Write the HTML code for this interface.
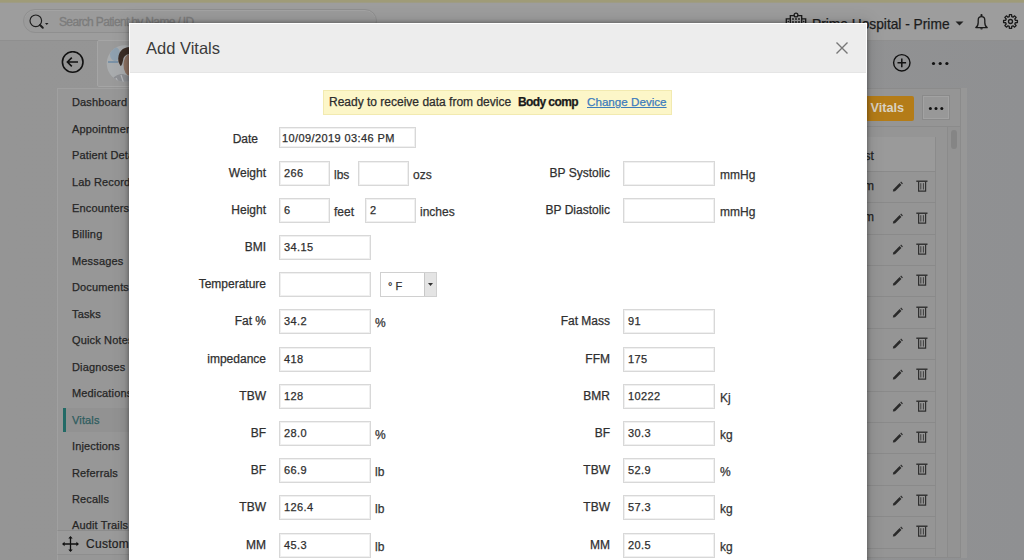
<!DOCTYPE html>
<html><head><meta charset="utf-8">
<style>
*{box-sizing:border-box;margin:0;padding:0}
html,body{width:1024px;height:560px;overflow:hidden;background:linear-gradient(90deg,#959595 0,#949494 60%,#8f9092 100%);font-family:"Liberation Sans",sans-serif;position:relative}
.a{position:absolute}
#topbar{left:0;top:0;width:1024px;height:3px;background:linear-gradient(#9f9b78 0,#9f9b78 2px,#9d9c90 3px)}
#hdr{left:0;top:3px;width:1024px;height:38px;background:#9d9d9d;border-bottom:1px solid #8f8f8f}
#search{left:23px;top:9px;width:354px;height:24px;border-radius:12px;background:#9b9b9b;border:1px solid #8f8f8f;box-shadow:inset 0 1px 0 #a3a3a3}
.stxt{font-size:13px;color:#8c8c8c;white-space:nowrap}
.htxt{font-size:14px;color:#1c1c1c;white-space:nowrap}
.side{left:57px;top:88px;width:100px;height:480px;background:#979797;border-left:1px solid #a0a0a0;border-top:1px solid #a0a0a0}
.si{position:absolute;left:72px;font-size:11px;line-height:14px;color:#262626;white-space:nowrap;letter-spacing:0.15px}
.si.act{color:#2f5d5f}
#actbg{left:64px;top:408px;width:80px;height:24px;background:#929292}
#actbar{left:63px;top:408px;width:3px;height:24px;background:#226a66}
.panel{left:840px;top:88px;width:121px;height:470px;background:#959595;border:1px solid #8b8b8b}
#avcard{left:97px;top:40px;width:60px;height:47px;background:#9a9a9a;border:1px solid #a5a5a5;border-radius:2px}
#orange{left:840px;top:95.5px;width:74px;height:25px;background:#b47c18;border-radius:2px}
#otxt{left:870.5px;top:101px;font-size:12.7px;font-weight:bold;color:#dad2c2}
#dotbtn{left:922px;top:95px;width:28px;height:25px;border:1px solid #8a8a8a;box-shadow:inset 0 0 0 1px #a2a2a2;background:#989898}
#tbline{left:840px;top:126px;width:120px;height:1px;background:#8b8b8b}
#thead{left:840px;top:137px;width:96px;height:34px;background:#9a9a9a;border-right:1px solid #8b8b8b}
.tsep{left:840px;width:96px;height:1px;background:#8a8a8a}
#tbody{left:840px;top:171px;width:96px;height:385px;border-right:1px solid #8b8b8b}
#strack{left:947px;top:127px;width:13px;height:430px;border-left:1px solid #8b8b8b;background:#939393}
#sthumb{left:951px;top:130px;width:6px;height:19px;border-radius:3px;background:#858585}
.ttxt{font-size:12px;color:#222}
#modal{left:129px;top:23px;width:738px;height:560px;background:#fff;box-shadow:0 0 4px 1px rgba(0,0,0,0.3),0 0 16px 2px rgba(0,0,0,0.12)}
#mhead{left:130px;top:24px;width:736px;height:49px;background:#ededed;border-bottom:1px solid #e5e5e5}
#mtitle{left:146px;top:39px;font-size:16.5px;color:#3b3b3b;white-space:nowrap}
.lbl{position:absolute;font-size:12px;line-height:14px;color:#2f2f2f;white-space:nowrap;text-align:right}
.inp{position:absolute;border:1px solid #d8d8d8;box-shadow:inset 0 0 0 1px #f0f0f0;background:#fff;font-size:11px;letter-spacing:0.4px;line-height:14px;color:#2e2e2e;padding:4px 0 0 4px;white-space:nowrap}
.unit{position:absolute;font-size:12px;line-height:14px;color:#333;white-space:nowrap}
.sel{position:absolute;border:1px solid #d0d0d0;background:#fff}
.deg{position:absolute;left:7px;top:6px;font-size:11px;line-height:14px;color:#333}
.selbtn{position:absolute;right:0;top:0;width:12px;height:23px;background:#e4e4e4;border-left:1px solid #c8c8c8;display:flex;align-items:center;justify-content:center}
#banner{left:323px;top:90px;width:349px;height:25px;background:#fcf6c8;border:1px solid #f2eab0}
.btxt{position:absolute;top:95.4px;font-size:12px;line-height:14px;white-space:nowrap;color:#2c2c2c}
.lbl,.inp,.unit,.btxt,.si,.deg,.htxt,.ttxt{-webkit-text-stroke:0.25px currentColor}
</style></head>
<body>
<div id="topbar" class="a"></div>
<div id="hdr" class="a"></div>
<div id="search" class="a"></div>
<svg class="a" style="left:29px;top:14px" width="22" height="17" viewBox="0 0 22 17"><circle cx="6.8" cy="6.8" r="5.8" stroke="#1e1e1e" stroke-width="1.2" fill="none"/><path d="M11 11 L13.8 13.8" stroke="#1e1e1e" stroke-width="2" stroke-linecap="round"/><path d="M16 9H19.5L17.75 11Z" fill="#1e1e1e"/></svg>
<div class="a stxt" style="left:59px;top:14.5px;font-size:12px;letter-spacing:-0.65px;-webkit-text-stroke:0.35px #7c7c7c;color:#7c7c7c">Search Patient by Name / ID</div>
<svg class="a" style="left:785px;top:11px" width="22" height="20" viewBox="0 0 22 20"><g stroke="#1a1a1a" stroke-width="1.3" fill="none"><path d="M5.3 18V4.6H16.7V18"/><path d="M1.3 18V7.8H5.3M16.7 7.8H20.7V18"/><circle cx="11" cy="4" r="1.9" fill="#9d9d9d"/></g><g fill="#1a1a1a"><circle cx="8" cy="8" r="0.9"/><circle cx="11" cy="8" r="0.9"/><circle cx="14" cy="8" r="0.9"/><circle cx="8" cy="11" r="0.9"/><circle cx="11" cy="11" r="0.9"/><circle cx="14" cy="11" r="0.9"/><circle cx="3.3" cy="10.5" r="0.8"/><circle cx="18.7" cy="10.5" r="0.8"/></g></svg>
<div class="a htxt" style="left:812px;top:16.5px;font-size:13.75px">Prime Hospital - Prime</div>
<svg class="a" style="left:955px;top:21px" width="9" height="5" viewBox="0 0 9 5"><path d="M0.5 0.5H8.5L4.5 4.5Z" fill="#222"/></svg>
<svg class="a" style="left:974px;top:13px" width="16" height="18" viewBox="0 0 16 18"><circle cx="7.5" cy="2.2" r="1.1" fill="#1a1a1a"/><path d="M1.8 14.6 C3.4 13.6 4.2 12.2 4.2 9.5 L4.2 7.2 C4.2 5 5.6 3.7 7.5 3.7 C9.4 3.7 10.8 5 10.8 7.2 L10.8 9.5 C10.8 12.2 11.6 13.6 13.2 14.6 Z" stroke="#1a1a1a" stroke-width="1.3" fill="none" stroke-linejoin="round"/><path d="M6.2 15.2 A1.3 1.3 0 0 0 8.8 15.2Z" fill="#1a1a1a"/></svg>
<svg class="a" style="left:1002.2px;top:12.8px" width="17" height="17" viewBox="0 0 17 17"><path d="M7.40 1.59 L9.60 1.59 L9.74 3.66 L11.05 4.20 L12.61 2.84 L14.16 4.39 L12.80 5.95 L13.34 7.26 L15.41 7.40 L15.41 9.60 L13.34 9.74 L12.80 11.05 L14.16 12.61 L12.61 14.16 L11.05 12.80 L9.74 13.34 L9.60 15.41 L7.40 15.41 L7.26 13.34 L5.95 12.80 L4.39 14.16 L2.84 12.61 L4.20 11.05 L3.66 9.74 L1.59 9.60 L1.59 7.40 L3.66 7.26 L4.20 5.95 L2.84 4.39 L4.39 2.84 L5.95 4.20 L7.26 3.66Z" stroke="#1a1a1a" stroke-width="1.3" fill="none" stroke-linejoin="round"/><circle cx="8.5" cy="8.5" r="2" stroke="#1a1a1a" stroke-width="1.3" fill="none"/></svg>

<svg class="a" style="left:61px;top:51px" width="24" height="23" viewBox="0 0 24 23"><circle cx="11.7" cy="11" r="10.3" stroke="#111" stroke-width="1.6" fill="none"/><path d="M17 11H6.5M10.8 6.6L6.4 11L10.8 15.4" stroke="#111" stroke-width="1.6" fill="none"/></svg>
<div id="avcard" class="a"></div>
<svg class="a" style="left:105px;top:44px" width="40" height="40" viewBox="0 0 40 40"><defs><clipPath id="cp"><circle cx="20" cy="19.5" r="18.3"/></clipPath></defs><g clip-path="url(#cp)"><rect width="40" height="40" fill="#a9acae"/><ellipse cx="10" cy="10" rx="5" ry="7" fill="#8fa1b0"/><rect x="3" y="17" width="10" height="2" fill="#7b92a6"/><path d="M5 40 C7 33 12 30 18 30 L26 33 L26 40 Z" fill="#8e9094"/><path d="M11 34 L14 40 M16 31 L19 40" stroke="#b5b7ba" stroke-width="1.3"/><ellipse cx="25" cy="21" rx="6.5" ry="11" fill="#8f7364"/><path d="M13.5 18 C12 8 18 3 25 3 L30 3 L30 10 C25 9 20 10 18.5 14 C18 17 17 22 15.5 22 Z" fill="#3c2e27"/></g></svg>
<svg class="a" style="left:892px;top:53px" width="20" height="20" viewBox="0 0 20 20"><circle cx="9.8" cy="9.8" r="8.2" stroke="#111" stroke-width="1.4" fill="none"/><path d="M9.8 5.4V14.2M5.5 9.8H14.1" stroke="#111" stroke-width="1.5"/></svg>
<svg class="a" style="left:931px;top:60.6px" width="19" height="5" viewBox="0 0 19 5"><circle cx="2.5" cy="2.5" r="1.6" fill="#111"/><circle cx="9.2" cy="2.5" r="1.6" fill="#111"/><circle cx="15.9" cy="2.5" r="1.6" fill="#111"/></svg>

<div class="a side"></div>
<div id="actbg" class="a"></div>
<div id="actbar" class="a"></div>
<div class="si" style="top:95.2px">Dashboard</div>
<div class="si" style="top:121.7px">Appointments</div>
<div class="si" style="top:148.1px">Patient Details</div>
<div class="si" style="top:174.6px">Lab Records</div>
<div class="si" style="top:201.0px">Encounters</div>
<div class="si" style="top:227.4px">Billing</div>
<div class="si" style="top:253.9px">Messages</div>
<div class="si" style="top:280.4px">Documents</div>
<div class="si" style="top:306.8px">Tasks</div>
<div class="si" style="top:333.2px">Quick Notes</div>
<div class="si" style="top:359.7px">Diagnoses</div>
<div class="si" style="top:386.1px">Medications</div>
<div class="si act" style="top:412.6px">Vitals</div>
<div class="si" style="top:439.0px">Injections</div>
<div class="si" style="top:465.5px">Referrals</div>
<div class="si" style="top:491.9px">Recalls</div>
<div class="si" style="top:518.4px">Audit Trails</div>
<div class="a" style="left:57px;top:530px;width:90px;height:25px;background:#9a9a9a;border-top:1px solid #8c8c8c;border-bottom:1px solid #8e8e8e;border-left:1px solid #a0a0a0"></div>
<svg class="a" style="left:62px;top:536px" width="17" height="16" viewBox="0 0 17 16"><path d="M8.5 1V15M1 8H16" stroke="#111" stroke-width="1.3"/><path d="M8.5 0L6.3 2.6H10.7Z M8.5 16L6.3 13.4H10.7Z M0 8L2.6 5.8V10.2Z M17 8L14.4 5.8V10.2Z" fill="#111"/></svg>
<div class="a" style="left:86px;top:536.5px;font-size:12px;letter-spacing:0.3px;color:#1e1e1e;white-space:nowrap;-webkit-text-stroke:0.2px #1e1e1e">Customize</div>

<div class="a panel"></div>
<div id="orange" class="a"></div>
<div id="otxt" class="a">Vitals</div>
<div id="dotbtn" class="a"></div>
<svg class="a" style="left:928px;top:105.5px" width="17" height="5" viewBox="0 0 17 5"><circle cx="2.4" cy="2.5" r="1.5" fill="#111"/><circle cx="8" cy="2.5" r="1.5" fill="#111"/><circle cx="13.8" cy="2.5" r="1.5" fill="#111"/></svg>
<div id="tbline" class="a"></div>
<div id="thead" class="a"></div>
<div id="tbody" class="a"></div>
<div class="a ttxt" style="left:864.5px;top:149px">st</div>
<div class="a tsep" style="top:170.9px"></div>
<svg class="a" style="left:891px;top:181.1px" width="14" height="14" viewBox="0 0 14 14"><path d="M1.8 10.6 L2.3 8.4 L8.6 2.1 L10.4 3.9 L4.1 10.2 Z" fill="#2a2a2a"/><path d="M9.3 1.4 L10.1 0.6 L11.9 2.4 L11.1 3.2Z" fill="#2a2a2a"/></svg>
<svg class="a" style="left:916px;top:178.1px" width="12" height="14" viewBox="0 0 12 14"><path d="M0.3 3.2H11.5" stroke="#262626" stroke-width="1.3"/><path d="M2.6 3.5V13.2H9.6V3.5" stroke="#303030" stroke-width="1.2" fill="none"/><path d="M4.8 5.2V11.5M7.4 5.2V11.5" stroke="#333" stroke-width="0.9"/></svg>
<div class="a ttxt" style="left:864px;top:178.9px">m</div>
<div class="a tsep" style="top:202.3px"></div>
<svg class="a" style="left:891px;top:212.5px" width="14" height="14" viewBox="0 0 14 14"><path d="M1.8 10.6 L2.3 8.4 L8.6 2.1 L10.4 3.9 L4.1 10.2 Z" fill="#2a2a2a"/><path d="M9.3 1.4 L10.1 0.6 L11.9 2.4 L11.1 3.2Z" fill="#2a2a2a"/></svg>
<svg class="a" style="left:916px;top:209.5px" width="12" height="14" viewBox="0 0 12 14"><path d="M0.3 3.2H11.5" stroke="#262626" stroke-width="1.3"/><path d="M2.6 3.5V13.2H9.6V3.5" stroke="#303030" stroke-width="1.2" fill="none"/><path d="M4.8 5.2V11.5M7.4 5.2V11.5" stroke="#333" stroke-width="0.9"/></svg>
<div class="a ttxt" style="left:864px;top:210.3px">m</div>
<div class="a tsep" style="top:233.7px"></div>
<svg class="a" style="left:891px;top:243.9px" width="14" height="14" viewBox="0 0 14 14"><path d="M1.8 10.6 L2.3 8.4 L8.6 2.1 L10.4 3.9 L4.1 10.2 Z" fill="#2a2a2a"/><path d="M9.3 1.4 L10.1 0.6 L11.9 2.4 L11.1 3.2Z" fill="#2a2a2a"/></svg>
<svg class="a" style="left:916px;top:240.9px" width="12" height="14" viewBox="0 0 12 14"><path d="M0.3 3.2H11.5" stroke="#262626" stroke-width="1.3"/><path d="M2.6 3.5V13.2H9.6V3.5" stroke="#303030" stroke-width="1.2" fill="none"/><path d="M4.8 5.2V11.5M7.4 5.2V11.5" stroke="#333" stroke-width="0.9"/></svg>
<div class="a tsep" style="top:265.0px"></div>
<svg class="a" style="left:891px;top:275.2px" width="14" height="14" viewBox="0 0 14 14"><path d="M1.8 10.6 L2.3 8.4 L8.6 2.1 L10.4 3.9 L4.1 10.2 Z" fill="#2a2a2a"/><path d="M9.3 1.4 L10.1 0.6 L11.9 2.4 L11.1 3.2Z" fill="#2a2a2a"/></svg>
<svg class="a" style="left:916px;top:272.2px" width="12" height="14" viewBox="0 0 12 14"><path d="M0.3 3.2H11.5" stroke="#262626" stroke-width="1.3"/><path d="M2.6 3.5V13.2H9.6V3.5" stroke="#303030" stroke-width="1.2" fill="none"/><path d="M4.8 5.2V11.5M7.4 5.2V11.5" stroke="#333" stroke-width="0.9"/></svg>
<div class="a tsep" style="top:296.4px"></div>
<svg class="a" style="left:891px;top:306.6px" width="14" height="14" viewBox="0 0 14 14"><path d="M1.8 10.6 L2.3 8.4 L8.6 2.1 L10.4 3.9 L4.1 10.2 Z" fill="#2a2a2a"/><path d="M9.3 1.4 L10.1 0.6 L11.9 2.4 L11.1 3.2Z" fill="#2a2a2a"/></svg>
<svg class="a" style="left:916px;top:303.6px" width="12" height="14" viewBox="0 0 12 14"><path d="M0.3 3.2H11.5" stroke="#262626" stroke-width="1.3"/><path d="M2.6 3.5V13.2H9.6V3.5" stroke="#303030" stroke-width="1.2" fill="none"/><path d="M4.8 5.2V11.5M7.4 5.2V11.5" stroke="#333" stroke-width="0.9"/></svg>
<div class="a tsep" style="top:327.8px"></div>
<svg class="a" style="left:891px;top:338.0px" width="14" height="14" viewBox="0 0 14 14"><path d="M1.8 10.6 L2.3 8.4 L8.6 2.1 L10.4 3.9 L4.1 10.2 Z" fill="#2a2a2a"/><path d="M9.3 1.4 L10.1 0.6 L11.9 2.4 L11.1 3.2Z" fill="#2a2a2a"/></svg>
<svg class="a" style="left:916px;top:335.0px" width="12" height="14" viewBox="0 0 12 14"><path d="M0.3 3.2H11.5" stroke="#262626" stroke-width="1.3"/><path d="M2.6 3.5V13.2H9.6V3.5" stroke="#303030" stroke-width="1.2" fill="none"/><path d="M4.8 5.2V11.5M7.4 5.2V11.5" stroke="#333" stroke-width="0.9"/></svg>
<div class="a tsep" style="top:359.2px"></div>
<svg class="a" style="left:891px;top:369.4px" width="14" height="14" viewBox="0 0 14 14"><path d="M1.8 10.6 L2.3 8.4 L8.6 2.1 L10.4 3.9 L4.1 10.2 Z" fill="#2a2a2a"/><path d="M9.3 1.4 L10.1 0.6 L11.9 2.4 L11.1 3.2Z" fill="#2a2a2a"/></svg>
<svg class="a" style="left:916px;top:366.4px" width="12" height="14" viewBox="0 0 12 14"><path d="M0.3 3.2H11.5" stroke="#262626" stroke-width="1.3"/><path d="M2.6 3.5V13.2H9.6V3.5" stroke="#303030" stroke-width="1.2" fill="none"/><path d="M4.8 5.2V11.5M7.4 5.2V11.5" stroke="#333" stroke-width="0.9"/></svg>
<div class="a tsep" style="top:390.6px"></div>
<svg class="a" style="left:891px;top:400.8px" width="14" height="14" viewBox="0 0 14 14"><path d="M1.8 10.6 L2.3 8.4 L8.6 2.1 L10.4 3.9 L4.1 10.2 Z" fill="#2a2a2a"/><path d="M9.3 1.4 L10.1 0.6 L11.9 2.4 L11.1 3.2Z" fill="#2a2a2a"/></svg>
<svg class="a" style="left:916px;top:397.8px" width="12" height="14" viewBox="0 0 12 14"><path d="M0.3 3.2H11.5" stroke="#262626" stroke-width="1.3"/><path d="M2.6 3.5V13.2H9.6V3.5" stroke="#303030" stroke-width="1.2" fill="none"/><path d="M4.8 5.2V11.5M7.4 5.2V11.5" stroke="#333" stroke-width="0.9"/></svg>
<div class="a tsep" style="top:421.9px"></div>
<svg class="a" style="left:891px;top:432.1px" width="14" height="14" viewBox="0 0 14 14"><path d="M1.8 10.6 L2.3 8.4 L8.6 2.1 L10.4 3.9 L4.1 10.2 Z" fill="#2a2a2a"/><path d="M9.3 1.4 L10.1 0.6 L11.9 2.4 L11.1 3.2Z" fill="#2a2a2a"/></svg>
<svg class="a" style="left:916px;top:429.1px" width="12" height="14" viewBox="0 0 12 14"><path d="M0.3 3.2H11.5" stroke="#262626" stroke-width="1.3"/><path d="M2.6 3.5V13.2H9.6V3.5" stroke="#303030" stroke-width="1.2" fill="none"/><path d="M4.8 5.2V11.5M7.4 5.2V11.5" stroke="#333" stroke-width="0.9"/></svg>
<div class="a tsep" style="top:453.3px"></div>
<svg class="a" style="left:891px;top:463.5px" width="14" height="14" viewBox="0 0 14 14"><path d="M1.8 10.6 L2.3 8.4 L8.6 2.1 L10.4 3.9 L4.1 10.2 Z" fill="#2a2a2a"/><path d="M9.3 1.4 L10.1 0.6 L11.9 2.4 L11.1 3.2Z" fill="#2a2a2a"/></svg>
<svg class="a" style="left:916px;top:460.5px" width="12" height="14" viewBox="0 0 12 14"><path d="M0.3 3.2H11.5" stroke="#262626" stroke-width="1.3"/><path d="M2.6 3.5V13.2H9.6V3.5" stroke="#303030" stroke-width="1.2" fill="none"/><path d="M4.8 5.2V11.5M7.4 5.2V11.5" stroke="#333" stroke-width="0.9"/></svg>
<div class="a tsep" style="top:484.7px"></div>
<svg class="a" style="left:891px;top:494.9px" width="14" height="14" viewBox="0 0 14 14"><path d="M1.8 10.6 L2.3 8.4 L8.6 2.1 L10.4 3.9 L4.1 10.2 Z" fill="#2a2a2a"/><path d="M9.3 1.4 L10.1 0.6 L11.9 2.4 L11.1 3.2Z" fill="#2a2a2a"/></svg>
<svg class="a" style="left:916px;top:491.9px" width="12" height="14" viewBox="0 0 12 14"><path d="M0.3 3.2H11.5" stroke="#262626" stroke-width="1.3"/><path d="M2.6 3.5V13.2H9.6V3.5" stroke="#303030" stroke-width="1.2" fill="none"/><path d="M4.8 5.2V11.5M7.4 5.2V11.5" stroke="#333" stroke-width="0.9"/></svg>
<div class="a tsep" style="top:516.1px"></div>
<svg class="a" style="left:891px;top:526.3px" width="14" height="14" viewBox="0 0 14 14"><path d="M1.8 10.6 L2.3 8.4 L8.6 2.1 L10.4 3.9 L4.1 10.2 Z" fill="#2a2a2a"/><path d="M9.3 1.4 L10.1 0.6 L11.9 2.4 L11.1 3.2Z" fill="#2a2a2a"/></svg>
<svg class="a" style="left:916px;top:523.3px" width="12" height="14" viewBox="0 0 12 14"><path d="M0.3 3.2H11.5" stroke="#262626" stroke-width="1.3"/><path d="M2.6 3.5V13.2H9.6V3.5" stroke="#303030" stroke-width="1.2" fill="none"/><path d="M4.8 5.2V11.5M7.4 5.2V11.5" stroke="#333" stroke-width="0.9"/></svg>
<div class="a tsep" style="top:547.5px"></div>
<div id="strack" class="a"></div>
<div class="a" style="left:961px;top:88px;width:6px;height:470px;background:#979797"></div>
<div id="sthumb" class="a"></div>

<div id="modal" class="a"></div>
<div id="mhead" class="a"></div>
<div id="mtitle" class="a">Add Vitals</div>
<svg class="a" style="left:835px;top:41px" width="14" height="14" viewBox="0 0 14 14"><path d="M1.5 1.5L12.5 12.5M12.5 1.5L1.5 12.5" stroke="#777" stroke-width="1.4"/></svg>

<div id="banner" class="a"></div>
<div class="btxt" style="left:329px">Ready to receive data from device</div>
<div class="btxt" style="left:518px;top:95px;font-weight:bold;color:#1a1a1a;font-size:12px;letter-spacing:-0.6px">Body comp</div>
<div class="btxt" style="left:587px;top:95px;color:#3d7cbd;text-decoration:underline;font-size:11.65px">Change Device</div>
<div class="lbl" style="right:766px;top:131.6px">Date</div>
<div class="inp" style="left:279px;top:127px;width:137px;height:21px;padding:3px 0 0 2px">10/09/2019 03:46 PM</div>
<div class="lbl" style="right:758px;top:165.8px">Weight</div>
<div class="inp" style="left:279px;top:161px;width:51px;height:25px">266</div>
<div class="unit" style="left:334px;top:168px">lbs</div>
<div class="inp" style="left:358px;top:161px;width:51px;height:25px"></div>
<div class="unit" style="left:413px;top:168px">ozs</div>
<div class="lbl" style="right:758px;top:202.8px">Height</div>
<div class="inp" style="left:279px;top:198px;width:51px;height:25px">6</div>
<div class="unit" style="left:334px;top:205px">feet</div>
<div class="inp" style="left:365px;top:198px;width:51px;height:25px">2</div>
<div class="unit" style="left:420px;top:205px">inches</div>
<div class="lbl" style="right:758px;top:239.8px">BMI</div>
<div class="inp" style="left:279px;top:235px;width:92px;height:25px">34.15</div>
<div class="lbl" style="right:758px;top:276.8px">Temperature</div>
<div class="inp" style="left:279px;top:272px;width:92px;height:25px"></div>
<div class="sel" style="left:380px;top:272px;width:57px;height:25px"><span class="deg">° F</span><div class="selbtn"><svg width="5" height="3" viewBox="0 0 5 3"><path d="M0 0H5L2.5 3Z" fill="#333"/></svg></div></div>
<div class="lbl" style="right:758px;top:313.8px">Fat %</div>
<div class="inp" style="left:279px;top:309px;width:92px;height:25px">34.2</div>
<div class="unit" style="left:375px;top:316px">%</div>
<div class="lbl" style="right:758px;top:351.8px">impedance</div>
<div class="inp" style="left:279px;top:347px;width:92px;height:25px">418</div>
<div class="lbl" style="right:758px;top:388.8px">TBW</div>
<div class="inp" style="left:279px;top:384px;width:92px;height:25px">128</div>
<div class="lbl" style="right:758px;top:425.8px">BF</div>
<div class="inp" style="left:279px;top:421px;width:92px;height:25px">28.0</div>
<div class="unit" style="left:375px;top:428px">%</div>
<div class="lbl" style="right:758px;top:462.8px">BF</div>
<div class="inp" style="left:279px;top:458px;width:92px;height:25px">66.9</div>
<div class="unit" style="left:375px;top:465px">lb</div>
<div class="lbl" style="right:758px;top:499.8px">TBW</div>
<div class="inp" style="left:279px;top:495px;width:92px;height:25px">126.4</div>
<div class="unit" style="left:375px;top:502px">lb</div>
<div class="lbl" style="right:758px;top:537.8px">MM</div>
<div class="inp" style="left:279px;top:533px;width:92px;height:25px">45.3</div>
<div class="unit" style="left:375px;top:540px">lb</div>
<div class="lbl" style="right:414px;top:165.8px">BP Systolic</div>
<div class="inp" style="left:623px;top:161px;width:92px;height:25px"></div>
<div class="unit" style="left:720px;top:168px">mmHg</div>
<div class="lbl" style="right:414px;top:202.8px">BP Diastolic</div>
<div class="inp" style="left:623px;top:198px;width:92px;height:25px"></div>
<div class="unit" style="left:720px;top:205px">mmHg</div>
<div class="lbl" style="right:414px;top:313.8px">Fat Mass</div>
<div class="inp" style="left:623px;top:309px;width:92px;height:25px">91</div>
<div class="lbl" style="right:414px;top:351.8px">FFM</div>
<div class="inp" style="left:623px;top:347px;width:92px;height:25px">175</div>
<div class="lbl" style="right:414px;top:388.8px">BMR</div>
<div class="inp" style="left:623px;top:384px;width:92px;height:25px">10222</div>
<div class="unit" style="left:720px;top:391px">Kj</div>
<div class="lbl" style="right:414px;top:425.8px">BF</div>
<div class="inp" style="left:623px;top:421px;width:92px;height:25px">30.3</div>
<div class="unit" style="left:720px;top:428px">kg</div>
<div class="lbl" style="right:414px;top:462.8px">TBW</div>
<div class="inp" style="left:623px;top:458px;width:92px;height:25px">52.9</div>
<div class="unit" style="left:720px;top:465px">%</div>
<div class="lbl" style="right:414px;top:499.8px">TBW</div>
<div class="inp" style="left:623px;top:495px;width:92px;height:25px">57.3</div>
<div class="unit" style="left:720px;top:502px">kg</div>
<div class="lbl" style="right:414px;top:537.8px">MM</div>
<div class="inp" style="left:623px;top:533px;width:92px;height:25px">20.5</div>
<div class="unit" style="left:720px;top:540px">kg</div>
</body></html>
